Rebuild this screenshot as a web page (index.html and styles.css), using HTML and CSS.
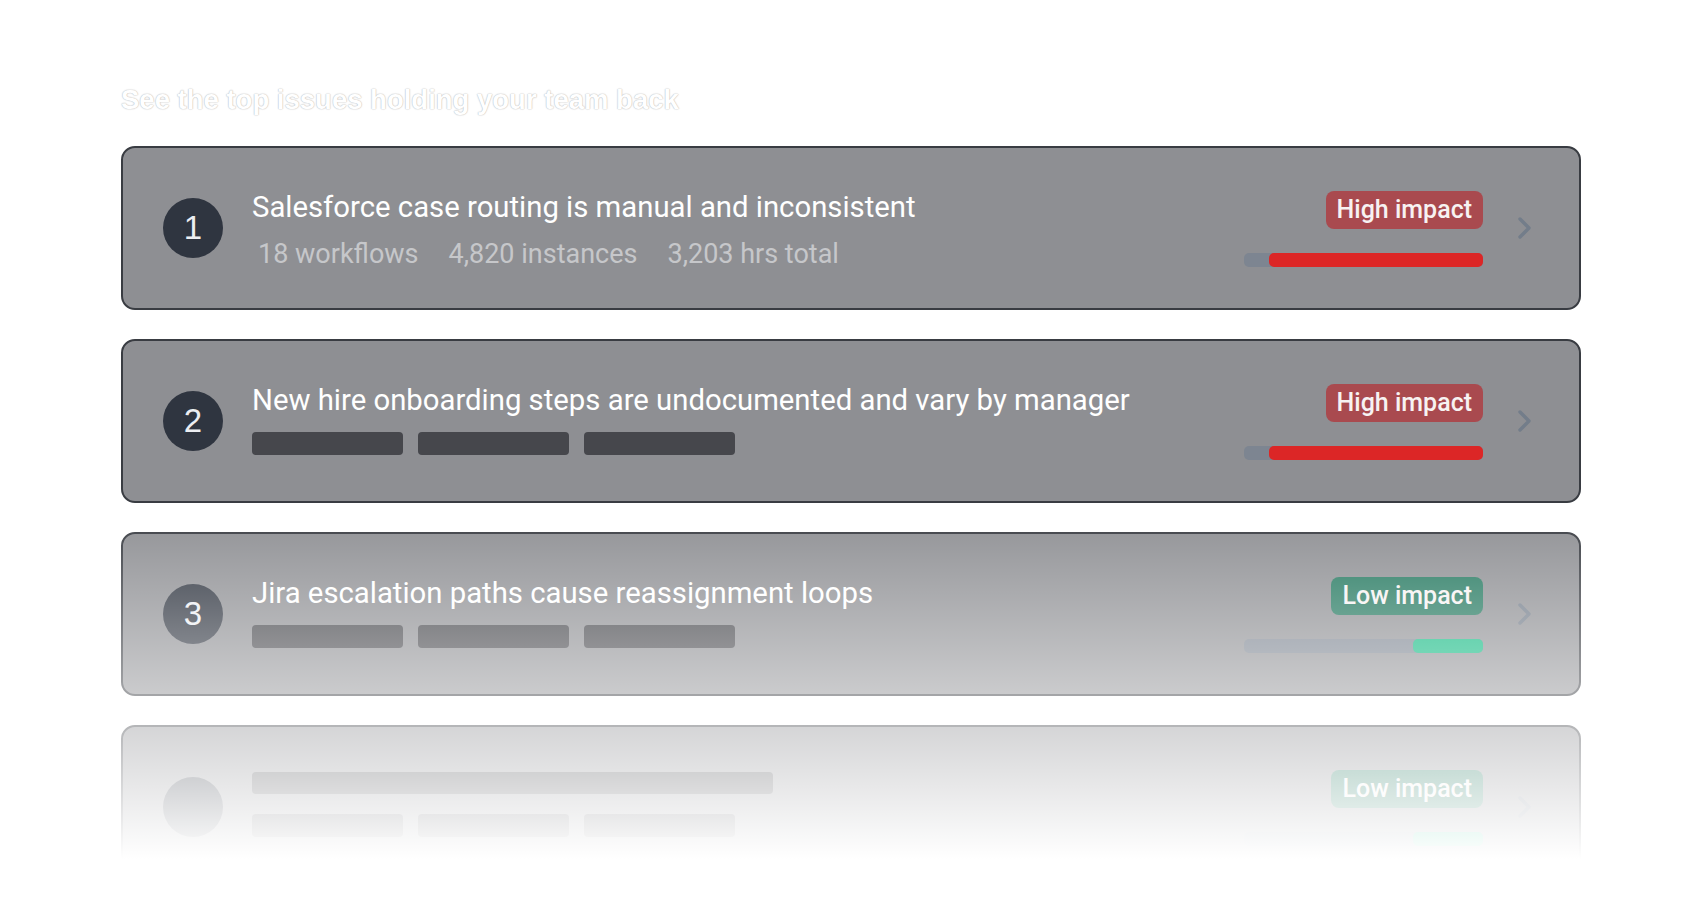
FILE: index.html
```html
<!DOCTYPE html>
<html lang="en">
<head>
<meta charset="utf-8">
<title>Top issues</title>
<link rel="stylesheet" href="styles.css">
</head>
<body>
<main class="page">
  <h1 class="heading">See the top issues holding your team back</h1>
  <div class="list">
    <div class="card">
      <div class="num">1</div>
      <div class="body">
        <div class="title">Salesforce case routing is manual and inconsistent</div>
        <div class="meta"><span>18 workflows</span><span>4,820 instances</span><span>3,203 hrs total</span></div>
      </div>
      <div class="impact">
        <span class="badge badge-high">High impact</span>
        <div class="track"><div class="fill fill-high" style="width:214px"></div></div>
      </div>
      <svg class="chev" width="16" height="24" viewBox="0 0 16 24"><path d="M3 3 L12 12 L3 21" fill="none" stroke="#737d8a" stroke-width="3.4" stroke-linecap="round" stroke-linejoin="round"/></svg>
    </div>

    <div class="card">
      <div class="num">2</div>
      <div class="body">
        <div class="title">New hire onboarding steps are undocumented and vary by manager</div>
        <div class="skels"><span class="skel"></span><span class="skel"></span><span class="skel"></span></div>
      </div>
      <div class="impact">
        <span class="badge badge-high">High impact</span>
        <div class="track"><div class="fill fill-high" style="width:214px"></div></div>
      </div>
      <svg class="chev" width="16" height="24" viewBox="0 0 16 24"><path d="M3 3 L12 12 L3 21" fill="none" stroke="#737d8a" stroke-width="3.4" stroke-linecap="round" stroke-linejoin="round"/></svg>
    </div>

    <div class="card">
      <div class="num">3</div>
      <div class="body">
        <div class="title">Jira escalation paths cause reassignment loops</div>
        <div class="skels"><span class="skel"></span><span class="skel"></span><span class="skel"></span></div>
      </div>
      <div class="impact">
        <span class="badge badge-low">Low impact</span>
        <div class="track"><div class="fill fill-low" style="width:70px"></div></div>
      </div>
      <svg class="chev" width="16" height="24" viewBox="0 0 16 24"><path d="M3 3 L12 12 L3 21" fill="none" stroke="#737d8a" stroke-width="3.4" stroke-linecap="round" stroke-linejoin="round"/></svg>
    </div>

    <div class="card">
      <div class="num"></div>
      <div class="body">
        <div class="skel skel-title"></div>
        <div class="skels"><span class="skel"></span><span class="skel"></span><span class="skel"></span></div>
      </div>
      <div class="impact">
        <span class="badge badge-low">Low impact</span>
        <div class="track"><div class="fill fill-low" style="width:70px"></div></div>
      </div>
      <svg class="chev" width="16" height="24" viewBox="0 0 16 24"><path d="M3 3 L12 12 L3 21" fill="none" stroke="#737d8a" stroke-width="3.4" stroke-linecap="round" stroke-linejoin="round"/></svg>
    </div>

    <div class="fade"></div>
  </div>
</main>
</body>
</html>
```

FILE: styles.css
```css
* { box-sizing: border-box; }

html, body {
  margin: 0;
  padding: 0;
  background: #ffffff;
}

body {
  font-family: Roboto, "Noto Sans", "Liberation Sans", sans-serif;
  height: 900px;
  overflow: hidden;
}

.page {
  width: 1460px;
  margin: 0 auto;
  padding-top: 83px;
}

.heading {
  margin: 0 0 29px 0;
  font-family: "Liberation Sans", Arial, sans-serif;
  font-weight: 700;
  font-size: 27.5px;
  line-height: 34px;
  color: #ffffff;
  text-shadow: 0 0 1.5px #b4b4b4, 0 0 1px #cfcfcf;
}

.list {
  position: relative;
  display: flex;
  flex-direction: column;
  gap: 29px;
}

.card {
  height: 164px;
  display: flex;
  align-items: center;
  padding: 0 46px 0 40px;
  border: 2px solid #393c42;
  border-radius: 14px;
  background: #8e8f93;
}

.num {
  flex: none;
  width: 60px;
  height: 60px;
  border-radius: 50%;
  background: #2f3540;
  color: #eceef2;
  font-family: "Liberation Sans", Arial, sans-serif;
  font-size: 33px;
  display: flex;
  align-items: center;
  justify-content: center;
}

.body {
  flex: 1;
  align-self: flex-start;
  margin-left: 29px;
  padding-top: 41px;
  display: flex;
  flex-direction: column;
}

.title {
  color: #ffffff;
  font-size: 29.3px;
  line-height: 36px;
}

.meta {
  display: flex;
  gap: 30px;
  margin-top: 13px;
  padding-left: 6px;
  color: #c6c7ca;
  font-size: 27px;
  line-height: 32px;
}

.skels {
  display: flex;
  gap: 15px;
  margin-top: 14px;
}

.skel {
  display: block;
  width: 151px;
  height: 23px;
  border-radius: 4px;
  background: #46474c;
}

.skel-title {
  width: 521px;
  height: 22px;
  margin-top: 4px;
  margin-bottom: 6px;
}

.impact {
  flex: none;
  display: flex;
  flex-direction: column;
  align-items: flex-end;
  gap: 24px;
  padding-top: 1px;
}

.badge {
  height: 38px;
  padding: 0 11px;
  border-radius: 8px;
  color: #f7f2f2;
  font-size: 25px;
  font-weight: 500;
  line-height: 38px;
}

.badge-high { background: #a94a4f; }
.badge-low { background: #24785f; }

.track {
  width: 239px;
  height: 14px;
  border-radius: 5px;
  background: #7d8591;
  display: flex;
  justify-content: flex-end;
}

.fill {
  height: 14px;
  border-radius: 5px;
}

.fill-high { background: #dc2626; }
.fill-low { background: #10b981; }

.chev {
  flex: none;
  margin-left: 34px;
}

.fade {
  position: absolute;
  left: -10px;
  right: -10px;
  top: 358px;
  bottom: -30px;
  background: linear-gradient(to bottom, rgba(255,255,255,0) 0px, rgba(255,255,255,1) 355px, rgba(255,255,255,1) 100%);
  pointer-events: none;
}
```
